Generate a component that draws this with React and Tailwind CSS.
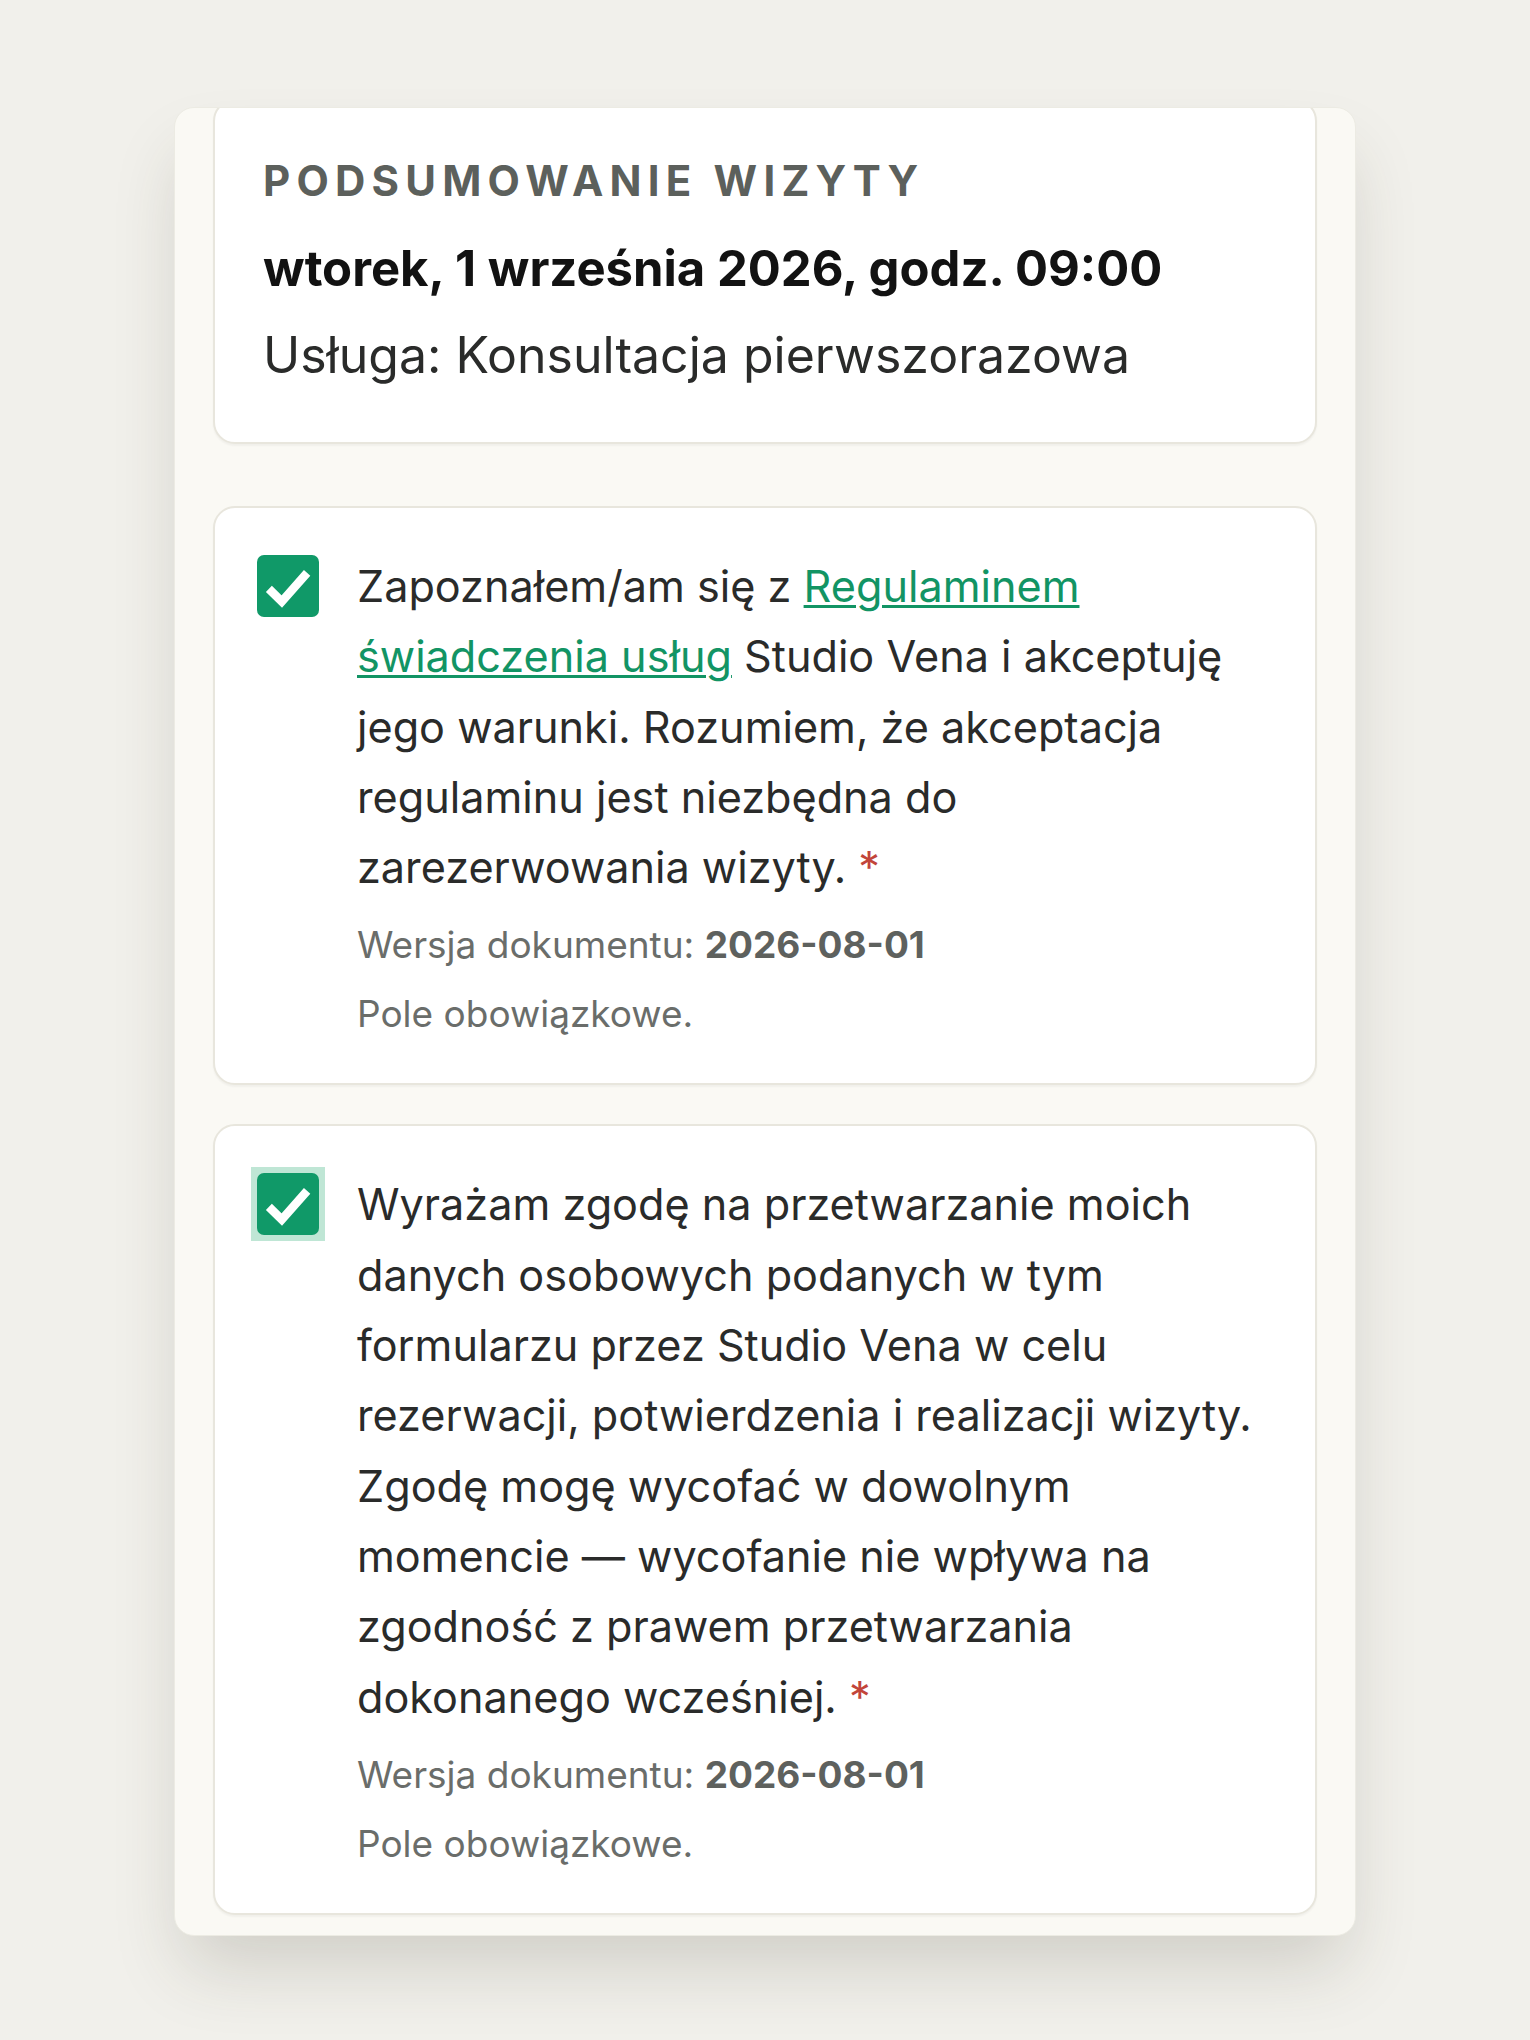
import React from "react";

function Box() {
  return (
    <span className="flex h-[62px] w-[62px] items-center justify-center rounded-[7px] bg-[#109968]">
      <svg viewBox="0 0 24 24" className="h-[62px] w-[62px]" fill="none">
        <path d="M4.6 13.1 L9.6 18 L19.4 6.9" stroke="#ffffff" strokeWidth="3.3" strokeLinecap="butt" strokeLinejoin="miter" />
      </svg>
    </span>
  );
}

function Consent({ focused, children }) {
  return (
    <div className="rounded-[22px] border-2 border-[#e8e6dd] bg-white pl-[42px] pr-[40px] pt-[43px] pb-[39px] shadow-[0_2px_2px_rgba(0,0,0,0.04)]">
      <div className="flex items-start gap-[38px]">
        {focused ? (
          <span className="shrink-0 pt-[4px]">
            <span className="-m-[6px] block bg-[#bfe6d5] p-[6px]">
              <Box />
            </span>
          </span>
        ) : (
          <span className="shrink-0 pt-[4px]">
            <Box />
          </span>
        )}
        <div className="min-w-0 flex-1">
          <p className="text-[43.2px] leading-[70.3px] text-[#2a2b2a]">
            {children} <span className="text-[#c2453a]">*</span>
          </p>
          <p className="mt-[13px] text-[37px] leading-[60px] text-[#6a6d6a]">
            Wersja dokumentu: <span className="font-bold text-[#5e615e]">2026-08-01</span>
          </p>
          <p className="mt-[9px] text-[37px] leading-[60px] text-[#6a6d6a]">Pole obowiązkowe.</p>
        </div>
      </div>
    </div>
  );
}

export default function App() {
  return (
    <div className="min-h-[2040px] bg-[#f1f0eb] pt-[107px] font-['Inter',sans-serif] antialiased">
      <div className="mx-auto w-[1182px] overflow-hidden rounded-[20px] border border-[#ecebe3] bg-[#faf9f4] px-[38px] pb-[20px] shadow-[0_40px_70px_-10px_rgba(60,55,40,0.18)]">
        <div className="-mt-[9px]">
          <div className="rounded-[22px] border-2 border-[#e8e6dd] bg-white pl-[48px] pr-[40px] pt-[48px] pb-[51px] shadow-[0_2px_2px_rgba(0,0,0,0.04)]">
            <div className="text-[42px] font-bold uppercase leading-[63px] tracking-[0.148em] text-[#5c605c]">
              Podsumowanie wizyty
            </div>
            <div className="mt-[21px] text-[49px] font-bold leading-[72px] text-[#121212]">
              wtorek, 1 września 2026, godz. 09:00
            </div>
            <div className="mt-[14px] text-[50px] leading-[72px] text-[#2a2b2a]">
              Usługa: Konsultacja pierwszorazowa
            </div>
          </div>
          <div className="mt-[62px]">
            <Consent>
              Zapoznałem/am się z{" "}
              <a href="#" className="text-[#129464] underline decoration-[2.5px] underline-offset-[3px]">
                Regulaminem świadczenia usług
              </a>{" "}
              Studio Vena i akceptuję jego warunki. Rozumiem, że akceptacja regulaminu jest niezbędna do zarezerwowania wizyty.
            </Consent>
          </div>
          <div className="mt-[39px]">
            <Consent focused>
              Wyrażam zgodę na przetwarzanie moich danych osobowych podanych w tym formularzu przez Studio Vena w celu rezerwacji, potwierdzenia i realizacji wizyty. Zgodę mogę wycofać w dowolnym momencie — wycofanie nie wpływa na zgodność z prawem przetwarzania dokonanego wcześniej.
            </Consent>
          </div>
        </div>
      </div>
    </div>
  );
}
